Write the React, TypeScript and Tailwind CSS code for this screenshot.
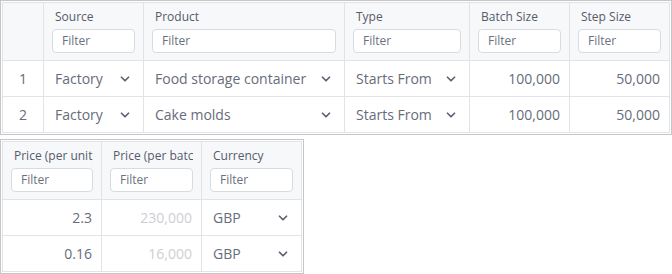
import { ChevronDown } from "lucide-react";

type Col = { label: string; w: string };

const topCols: Col[] = [
  { label: "Source", w: "w-[100px]" },
  { label: "Product", w: "w-[201px]" },
  { label: "Type", w: "w-[125px]" },
  { label: "Batch Size", w: "w-[100px]" },
  { label: "Step Size", w: "w-[100px]" },
];

const bottomCols: Col[] = [
  { label: "Price (per unit)", w: "w-[99px]" },
  { label: "Price (per batch)", w: "w-[100px]" },
  { label: "Currency", w: "w-[100px]" },
];

const topRows = [
  { n: 1, source: "Factory", product: "Food storage container", type: "Starts From", batch: "100,000", step: "50,000" },
  { n: 2, source: "Factory", product: "Cake molds", type: "Starts From", batch: "100,000", step: "50,000" },
];

const bottomRows = [
  { unit: "2.3", batch: "230,000", currency: "GBP" },
  { unit: "0.16", batch: "16,000", currency: "GBP" },
];

function HeaderCell({ col }: { col: Col }) {
  return (
    <div className={`${col.w} shrink-0 h-[58px] bg-[#f7f8fa] border-r border-b border-[#e2e3e6] px-2 pt-[5px] overflow-hidden`}>
      <div className="pl-[3px] text-[12px] leading-[18px] text-[#555b6b] whitespace-nowrap overflow-hidden">
        {col.label}
      </div>
      <div className="mt-[3px] h-6 rounded-[4px] border border-[#d8dbe0] bg-white pl-[9px] text-[12px] leading-[22px] text-[#6b7080]">
        Filter
      </div>
    </div>
  );
}

function SelectCell({ w, value }: { w: string; value: string }) {
  return (
    <div className={`${w} shrink-0 h-9 border-r border-b border-[#e2e3e6] flex items-center pl-[11px] pr-[11px] text-[14px] text-[#676c7a]`}>
      <span className="flex-1 whitespace-nowrap overflow-hidden">{value}</span>
      <ChevronDown size={14} strokeWidth={3} className="text-[#5d6272] shrink-0" />
    </div>
  );
}

function NumCell({ w, value, muted }: { w: string; value: string; muted?: boolean }) {
  return (
    <div
      className={`${w} shrink-0 h-9 border-r border-b border-[#e2e3e6] flex items-center justify-end pr-[9px] text-[14px] ${
        muted ? "text-[#cdced2]" : "text-[#676c7a]"
      }`}
    >
      {value}
    </div>
  );
}

export default function App() {
  return (
    <div className="w-[672px] h-[274px] bg-white flex flex-col gap-[4px] font-['Open_Sans',sans-serif]">
      {/* top grid */}
      <div className="w-[672px] border border-[#c5c6c8] p-px">
        <div className="border-l border-t border-[#e2e3e6]">
          <div className="flex">
            <div className="w-[41px] shrink-0 h-[58px] bg-[#f7f8fa] border-r border-b border-[#e2e3e6]" />
            {topCols.map((c) => (
              <HeaderCell key={c.label} col={c} />
            ))}
          </div>
          {topRows.map((r) => (
            <div key={r.n} className="flex">
              <div className="w-[41px] shrink-0 h-9 border-r border-b border-[#e2e3e6] flex items-center justify-center text-[14px] text-[#676c7a]">
                {r.n}
              </div>
              <SelectCell w="w-[100px]" value={r.source} />
              <SelectCell w="w-[201px]" value={r.product} />
              <SelectCell w="w-[125px]" value={r.type} />
              <NumCell w="w-[100px]" value={r.batch} />
              <NumCell w="w-[100px]" value={r.step} />
            </div>
          ))}
        </div>
      </div>

      {/* bottom grid */}
      <div className="w-[304px] border border-[#c5c6c8] p-px">
        <div className="border-l border-t border-[#e2e3e6]">
          <div className="flex">
            {bottomCols.map((c) => (
              <HeaderCell key={c.label} col={c} />
            ))}
          </div>
          {bottomRows.map((r, i) => (
            <div key={i} className="flex">
              <NumCell w="w-[99px]" value={r.unit} />
              <NumCell w="w-[100px]" value={r.batch} muted />
              <SelectCell w="w-[100px]" value={r.currency} />
            </div>
          ))}
        </div>
      </div>
    </div>
  );
}
